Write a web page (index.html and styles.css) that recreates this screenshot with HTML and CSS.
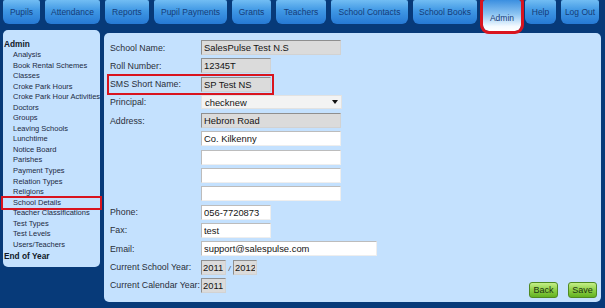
FILE: index.html
```html
<!DOCTYPE html>
<html>
<head>
<meta charset="utf-8">
<link rel="stylesheet" href="styles.css">
</head>
<body>
<nav class="tabs">
  <a class="tab w-pupils">Pupils</a>
  <a class="tab w-att">Attendance</a>
  <a class="tab w-rep">Reports</a>
  <a class="tab w-pp">Pupil Payments</a>
  <a class="tab w-gr">Grants</a>
  <a class="tab w-te">Teachers</a>
  <a class="tab w-sc">School Contacts</a>
  <a class="tab w-sb">School Books</a>
  <a class="tab active w-ad">Admin</a>
  <a class="tab w-he">Help</a>
  <a class="tab w-lo">Log Out</a>
</nav>
<div class="main">
  <aside class="side">
    <div class="side-head">Admin</div>
    <ul class="side-list">
      <li>Analysis</li>
      <li>Book Rental Schemes</li>
      <li>Classes</li>
      <li>Croke Park Hours</li>
      <li>Croke Park Hour Activities</li>
      <li>Doctors</li>
      <li>Groups</li>
      <li>Leaving Schools</li>
      <li>Lunchtime</li>
      <li>Notice Board</li>
      <li>Parishes</li>
      <li>Payment Types</li>
      <li>Relation Types</li>
      <li>Religions</li>
      <li class="marked">School Details</li>
      <li>Teacher Classifications</li>
      <li>Test Types</li>
      <li>Test Levels</li>
      <li>Users/Teachers</li>
    </ul>
    <div class="side-head end">End of Year</div>
  </aside>
  <section class="panel">
    <div class="form">
      <div class="row"><span class="lbl">School Name:</span><input class="fld grey w-long" value="SalesPulse Test N.S" readonly></div>
      <div class="row"><span class="lbl">Roll Number:</span><input class="fld grey w-short" value="12345T" readonly></div>
      <div class="row marked-row"><span class="lbl">SMS Short Name:</span><input class="fld grey w-short" value="SP Test NS" readonly></div>
      <div class="row"><span class="lbl">Principal:</span><div class="sel"><span>checknew</span><svg width="6" height="4" viewBox="0 0 6 4"><path d="M0 0h6L3 4z" fill="#111"/></svg></div></div>
      <div class="row"><span class="lbl">Address:</span><input class="fld grey w-long" value="Hebron Road" readonly></div>
      <div class="row"><span class="lbl"></span><input class="fld white w-long" value="Co. Kilkenny"></div>
      <div class="row"><span class="lbl"></span><input class="fld white w-long" value=""></div>
      <div class="row"><span class="lbl"></span><input class="fld white w-long" value=""></div>
      <div class="row"><span class="lbl"></span><input class="fld white w-long" value=""></div>
      <div class="row"><span class="lbl">Phone:</span><input class="fld white w-short" value="056-7720873"></div>
      <div class="row"><span class="lbl">Fax:</span><input class="fld white w-short" value="test"></div>
      <div class="row"><span class="lbl">Email:</span><input class="fld white w-email" value="support@salespulse.com"></div>
      <div class="row"><span class="lbl">Current School Year:</span><input class="fld grey w-year" value="2011" readonly><span class="slash">/</span><input class="fld grey w-year2" value="2012" readonly></div>
      <div class="row"><span class="lbl">Current Calendar Year:</span><input class="fld grey w-year" value="2011" readonly>
        <div class="actions">
          <button class="btn">Back</button>
          <button class="btn">Save</button>
        </div>
      </div>
    </div>
  </section>
</div>
</body>
</html>
```
FILE: styles.css
```css
* { box-sizing: border-box; }
html, body { margin: 0; padding: 0; }
body {
  width: 605px;
  height: 308px;
  background: #073a79;
  font-family: "Liberation Sans", Arial, sans-serif;
  overflow: hidden;
}
.tabs {
  display: flex;
  gap: 5px;
  padding-left: 3px;
  height: 30px;
  align-items: flex-start;
}
.tab {
  height: 24px;
  display: flex;
  align-items: center;
  justify-content: center;
  padding-bottom: 1px;
  font-size: 8.5px;
  color: #163c78;
  border-radius: 2px 2px 6px 6px;
  background: linear-gradient(#72bdf3 0%, #3f97e4 45%, #2679d4 100%);
  white-space: nowrap;
}
.w-pupils { width: 37px; }
.w-att { width: 55px; }
.w-rep { width: 44px; }
.w-pp { width: 73px; }
.w-gr { width: 39px; }
.w-te { width: 50px; }
.w-sc { width: 77px; }
.w-sb { width: 64px; }
.w-ad { width: 38px; }
.w-he { width: 31px; }
.w-lo { width: 38px; }
.tab.active {
  height: 31px;
  padding-bottom: 0;
  padding-top: 5px;
  background: linear-gradient(#3b8fe0 0%, #8cc4f2 45%, #f4faff 85%, #ffffff 100%);
  outline: 3px solid #d9141e;
  outline-offset: 0;
  position: relative;
  left: 1px;
}
.main {
  display: flex;
  align-items: flex-start;
  padding-left: 3px;
}
.side {
  width: 97px;
  height: 237px;
  background: #c4e1fe;
  border-radius: 5px;
  padding: 9px 0 0 0;
  color: #14203a;
}
.side-head {
  font-weight: bold;
  font-size: 8.3px;
  line-height: 11px;
  padding-left: 1px;
  color: #101828;
}
.side-head.end { margin-top: 1px; }
.side-list {
  list-style: none;
  margin: 0;
  padding: 0;
}
.side-list li {
  font-size: 7.5px;
  line-height: 10.55px;
  padding-left: 10px;
  white-space: nowrap;
  overflow: hidden;
  color: #1c2a44;
}
.side-list li.marked {
  outline: 2px solid #d9141e;
  outline-offset: 0;
}
.panel {
  margin-left: 4px;
  margin-top: 3px;
  width: 497px;
  height: 269px;
  background: #c4e1fe;
  border-radius: 5px;
  padding: 7px 4px 5px 6px;
}
.form {
  display: flex;
  flex-direction: column;
  gap: 3.3px;
}
.row {
  display: flex;
  align-items: center;
  height: 15px;
}
.row.marked-row {
  outline: 2px solid #d9141e;
  outline-offset: 1px;
  width: 161px;
}
.lbl {
  width: 91px;
  flex: none;
  font-size: 8.8px;
  color: #2a2f3a;
  white-space: nowrap;
}
.fld {
  height: 15px;
  margin: 0;
  padding: 0 2px;
  font-family: "Liberation Sans", Arial, sans-serif;
  font-size: 9.4px;
  color: #141414;
  border: 1px solid;
  outline: none;
}
.fld.grey {
  background: #dbdbdb;
  border-color: #8f8f8f #d2d2d2 #d2d2d2 #8f8f8f;
}
.fld.white {
  background: #ffffff;
  border-color: #bcbcbc #eeeeee #eeeeee #bcbcbc;
}
.w-long { width: 140px; }
.w-short { width: 70px; }
.w-email { width: 176px; }
.w-year { width: 25px; padding: 0 1px; }
.w-year2 { width: 24px; padding: 0 1px; }
.slash {
  width: 7px;
  text-align: center;
  font-size: 7px;
  color: #333;
  font-style: italic;
  padding-top: 3px;
}
.sel {
  width: 141px;
  height: 14px;
  background: #f3f3f3;
  border: 1px solid #e2e2e2;
  display: flex;
  align-items: center;
  justify-content: space-between;
  padding: 0 3px 0 3px;
  font-size: 9.4px;
  color: #141414;
}
.actions {
  margin-left: auto;
  align-self: flex-start;
  margin-top: 4px;
  display: flex;
  gap: 10px;
}
.btn {
  width: 29px;
  height: 16px;
  padding: 0;
  font-family: "Liberation Sans", Arial, sans-serif;
  font-size: 9px;
  color: #1b3410;
  border: 1px solid #4f8a22;
  border-radius: 3px;
  background: linear-gradient(#c4ef88 0%, #8fd048 50%, #62b222 100%);
}
```
